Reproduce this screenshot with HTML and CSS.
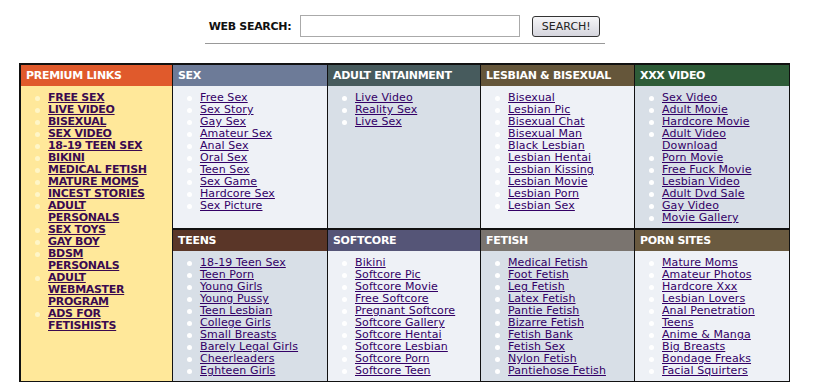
FILE: index.html
```html
<!DOCTYPE html>
<html lang="en">
<head>
  <meta charset="UTF-8" />
  <title>Links</title>
  <link rel="stylesheet" href="styles.css">
</head>
<body>
  <div class="page">

    <!-- Search -->
    <div class="search">
      <form class="search-form" onsubmit="return false">
        <label for="q">WEB SEARCH:</label>
        <input type="text" id="q">
        <button type="submit">SEARCH!</button>
      </form>
      <div class="search-line"></div>
    </div>

    <!-- Link table -->
    <div class="links">
      <div class="head premium-head">PREMIUM LINKS</div>
      <ul class="box premium">
        <li><a href="#">FREE SEX</a></li>
        <li><a href="#">LIVE VIDEO</a></li>
        <li><a href="#">BISEXUAL</a></li>
        <li><a href="#">SEX VIDEO</a></li>
        <li><a href="#">18-19 TEEN SEX</a></li>
        <li><a href="#">BIKINI</a></li>
        <li><a href="#">MEDICAL FETISH</a></li>
        <li><a href="#">MATURE MOMS</a></li>
        <li><a href="#">INCEST STORIES</a></li>
        <li><a href="#">ADULT PERSONALS</a></li>
        <li><a href="#">SEX TOYS</a></li>
        <li><a href="#">GAY BOY</a></li>
        <li><a href="#">BDSM PERSONALS</a></li>
        <li><a href="#">ADULT WEBMASTER PROGRAM</a></li>
        <li><a href="#">ADS FOR FETISHISTS</a></li>
      </ul>

      <div class="head h-sex">SEX</div>
      <div class="head h-adult">ADULT ENTAINMENT</div>
      <div class="head h-lesbian">LESBIAN &amp; BISEXUAL</div>
      <div class="head h-xxx">XXX VIDEO</div>

      <ul class="box light top">
        <li><a href="#">Free Sex</a></li>
        <li><a href="#">Sex Story</a></li>
        <li><a href="#">Gay Sex</a></li>
        <li><a href="#">Amateur Sex</a></li>
        <li><a href="#">Anal Sex</a></li>
        <li><a href="#">Oral Sex</a></li>
        <li><a href="#">Teen Sex</a></li>
        <li><a href="#">Sex Game</a></li>
        <li><a href="#">Hardcore Sex</a></li>
        <li><a href="#">Sex Picture</a></li>
      </ul>
      <ul class="box dark top">
        <li><a href="#">Live Video</a></li>
        <li><a href="#">Reality Sex</a></li>
        <li><a href="#">Live Sex</a></li>
      </ul>
      <ul class="box light top">
        <li><a href="#">Bisexual</a></li>
        <li><a href="#">Lesbian Pic</a></li>
        <li><a href="#">Bisexual Chat</a></li>
        <li><a href="#">Bisexual Man</a></li>
        <li><a href="#">Black Lesbian</a></li>
        <li><a href="#">Lesbian Hentai</a></li>
        <li><a href="#">Lesbian Kissing</a></li>
        <li><a href="#">Lesbian Movie</a></li>
        <li><a href="#">Lesbian Porn</a></li>
        <li><a href="#">Lesbian Sex</a></li>
      </ul>
      <ul class="box dark top">
        <li><a href="#">Sex Video</a></li>
        <li><a href="#">Adult Movie</a></li>
        <li><a href="#">Hardcore Movie</a></li>
        <li><a href="#">Adult Video Download</a></li>
        <li><a href="#">Porn Movie</a></li>
        <li><a href="#">Free Fuck Movie</a></li>
        <li><a href="#">Lesbian Video</a></li>
        <li><a href="#">Adult Dvd Sale</a></li>
        <li><a href="#">Gay Video</a></li>
        <li><a href="#">Movie Gallery</a></li>
      </ul>

      <div class="head h-teens">TEENS</div>
      <div class="head h-soft">SOFTCORE</div>
      <div class="head h-fetish">FETISH</div>
      <div class="head h-porn">PORN SITES</div>

      <ul class="box dark">
        <li><a href="#">18-19 Teen Sex</a></li>
        <li><a href="#">Teen Porn</a></li>
        <li><a href="#">Young Girls</a></li>
        <li><a href="#">Young Pussy</a></li>
        <li><a href="#">Teen Lesbian</a></li>
        <li><a href="#">College Girls</a></li>
        <li><a href="#">Small Breasts</a></li>
        <li><a href="#">Barely Legal Girls</a></li>
        <li><a href="#">Cheerleaders</a></li>
        <li><a href="#">Eghteen Girls</a></li>
      </ul>
      <ul class="box light">
        <li><a href="#">Bikini</a></li>
        <li><a href="#">Softcore Pic</a></li>
        <li><a href="#">Softcore Movie</a></li>
        <li><a href="#">Free Softcore</a></li>
        <li><a href="#">Pregnant Softcore</a></li>
        <li><a href="#">Softcore Gallery</a></li>
        <li><a href="#">Softcore Hentai</a></li>
        <li><a href="#">Softcore Lesbian</a></li>
        <li><a href="#">Softcore Porn</a></li>
        <li><a href="#">Softcore Teen</a></li>
      </ul>
      <ul class="box dark">
        <li><a href="#">Medical Fetish</a></li>
        <li><a href="#">Foot Fetish</a></li>
        <li><a href="#">Leg Fetish</a></li>
        <li><a href="#">Latex Fetish</a></li>
        <li><a href="#">Pantie Fetish</a></li>
        <li><a href="#">Bizarre Fetish</a></li>
        <li><a href="#">Fetish Bank</a></li>
        <li><a href="#">Fetish Sex</a></li>
        <li><a href="#">Nylon Fetish</a></li>
        <li><a href="#">Pantiehose Fetish</a></li>
      </ul>
      <ul class="box light">
        <li><a href="#">Mature Moms</a></li>
        <li><a href="#">Amateur Photos</a></li>
        <li><a href="#">Hardcore Xxx</a></li>
        <li><a href="#">Lesbian Lovers</a></li>
        <li><a href="#">Anal Penetration</a></li>
        <li><a href="#">Teens</a></li>
        <li><a href="#">Anime &amp; Manga</a></li>
        <li><a href="#">Big Breasts</a></li>
        <li><a href="#">Bondage Freaks</a></li>
        <li><a href="#">Facial Squirters</a></li>
      </ul>
    </div>

  </div>
</body>
</html>
```

FILE: styles.css
```css
body {
  margin: 0;
  padding: 0;
  background: #fff;
  font-family: "DejaVu Sans", Verdana, sans-serif;
  font-size: 11px;
}

.page {
  width: 771px;
  margin-left: 19px;
}

/* Search */
.search {
  display: flex;
  flex-direction: column;
  align-items: center;
  padding-top: 15px;
  height: 48px;
}

.search-form {
  display: flex;
  align-items: center;
  height: 22px;
}

.search-form label {
  font-weight: bold;
  font-size: 11px;
  letter-spacing: -0.3px;
  color: #111;
  margin-right: 9px;
}

.search-form input {
  width: 220px;
  height: 22px;
  box-sizing: border-box;
  border: 1px solid #aaa;
  padding: 2px 4px;
  margin: 0;
}

.search-form button {
  width: 68px;
  height: 21px;
  margin-left: 12px;
  padding: 0;
  border: 1px solid #333;
  border-radius: 3px;
  background: linear-gradient(#f6f6f8, #d6d6de);
  font-family: "DejaVu Sans", Verdana, sans-serif;
  font-size: 11px;
  color: #222;
}

.search-line {
  width: 400px;
  height: 1px;
  background: #999;
  margin-top: 6px;
}

/* Link table */
.links {
  display: grid;
  grid-template-columns: 151px 154px 152px 153px 154px;
  grid-template-rows: 21px auto 21px auto;
  column-gap: 1px;
  background: #111;
  border: 2px solid #111;
}

.head {
  color: #fff;
  font-weight: bold;
  font-size: 11px;
  letter-spacing: -0.3px;
  line-height: 21px;
  padding-left: 5px;
  white-space: nowrap;
}

.premium-head { background: #e05a2c; grid-column: 1; grid-row: 1; }
.h-sex { background: #6d7b98; }
.h-adult { background: #475b5d; }
.h-lesbian { background: #65563a; }
.h-xxx { background: #2e5c38; }
.h-teens { background: #5a3628; }
.h-soft { background: #555577; }
.h-fetish { background: #7a746f; }
.h-porn { background: #6a5a40; }

.box {
  list-style: none;
  margin: 0;
  padding: 6px 18px 4px 14px;
  line-height: 12px;
}

.box.top {
  margin-bottom: 2px;
}

.light { background: #eef1f6; }
.dark { background: #d8dfe7; }

.premium {
  grid-column: 1;
  grid-row: 2 / 5;
  background: #ffe89a;
  padding-right: 17px;
}

.box li {
  display: flex;
  align-items: flex-start;
}

.box li::before {
  content: "";
  flex: none;
  width: 5px;
  height: 5px;
  border-radius: 50%;
  background: #fff;
  margin: 4px 8px 0 0;
}

.premium li::before {
  background: #fff6c8;
}

.box a {
  color: #330066;
  text-decoration: underline;
  letter-spacing: 0.1px;
}

.premium a {
  font-weight: bold;
  color: #3a0a50;
  letter-spacing: -0.3px;
}
```
